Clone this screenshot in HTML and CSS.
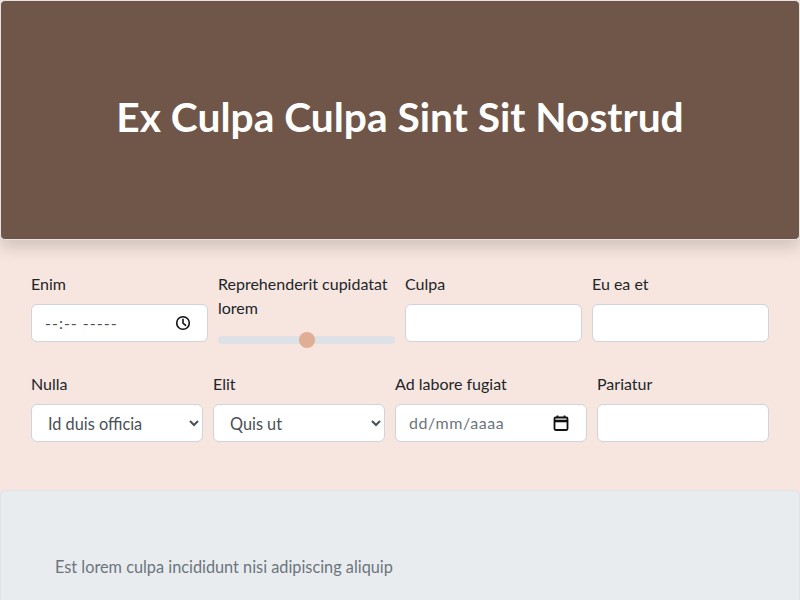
FILE: index.html
```html
<!DOCTYPE html>
<html lang="pt">
<head>
<meta charset="utf-8">
<title>Ex Culpa Culpa Sint Sit Nostrud</title>
<link rel="stylesheet" href="styles.css">
</head>
<body>
  <header class="hero">
    <h1 class="hero-title">Ex Culpa Culpa Sint Sit Nostrud</h1>
  </header>

  <section class="form-area">
    <div class="form-row row-one">
      <div class="field">
        <label class="field-label">Enim</label>
        <div class="control picker">
          <span class="picker-text">--:-- -----</span>
          <svg class="picker-icon" width="16" height="16" viewBox="0 0 16 16" fill="none" stroke="#111" stroke-width="1.6">
            <circle cx="8" cy="8" r="6.3"/>
            <path d="M8 4.3V8.2L10.6 10.3" stroke-linecap="round" stroke-linejoin="round"/>
          </svg>
        </div>
      </div>
      <div class="field">
        <label class="field-label">Reprehenderit cupidatat lorem</label>
        <input class="range" type="range" min="0" max="100" value="50">
      </div>
      <div class="field">
        <label class="field-label">Culpa</label>
        <input class="control" type="text">
      </div>
      <div class="field">
        <label class="field-label">Eu ea et</label>
        <input class="control" type="text">
      </div>
    </div>

    <div class="form-row row-two">
      <div class="field">
        <label class="field-label">Nulla</label>
        <select class="control select">
          <option>Id duis officia</option>
        </select>
      </div>
      <div class="field">
        <label class="field-label">Elit</label>
        <select class="control select">
          <option>Quis ut</option>
        </select>
      </div>
      <div class="field">
        <label class="field-label">Ad labore fugiat</label>
        <div class="control picker">
          <span class="picker-text date-text">dd/mm/aaaa</span>
          <svg class="picker-icon" width="18" height="18" viewBox="0 0 18 18" fill="none" stroke="#111" stroke-width="1.8">
            <rect x="2.5" y="3.5" width="13" height="12.5" rx="1.2"/>
            <path d="M2.5 7H15.5" stroke-width="2.6"/>
            <path d="M5.5 1.5V4M12.5 1.5V4" stroke-width="1.8"/>
          </svg>
        </div>
      </div>
      <div class="field">
        <label class="field-label">Pariatur</label>
        <input class="control" type="text">
      </div>
    </div>
  </section>

  <section class="note">
    <p class="note-text">Est lorem culpa incididunt nisi adipiscing aliquip</p>
  </section>
</body>
</html>
```

FILE: styles.css
```css
* {
  box-sizing: border-box;
}

html, body {
  margin: 0;
  padding: 0;
}

body {
  font-family: "Lato", "Open Sans", "Liberation Sans", sans-serif;
  font-size: 16px;
  line-height: 1.5;
  color: #212529;
  background: #f7e6e0;
  overflow: hidden;
}

.hero {
  height: 240px;
  padding-bottom: 6px;
  background: #705649;
  border: 1px solid #e4e4e4;
  border-radius: 5px;
  box-shadow: 0 8px 16px rgba(0, 0, 0, 0.15);
  display: flex;
  align-items: center;
  justify-content: center;
  position: relative;
  z-index: 1;
}

.hero-title {
  margin: 0;
  color: #ffffff;
  font-size: 40.7px;
  font-weight: 700;
  line-height: 1.2;
  letter-spacing: 0;
}

.form-area {
  padding: 32px 31px 28px 31px;
  background: #f7e6e0;
}

.form-row {
  display: grid;
  column-gap: 10px;
  margin-bottom: 20px;
  align-items: start;
}

.row-one {
  grid-template-columns: 1fr 1fr 1fr 1fr;
}

.row-two {
  grid-template-columns: 1fr 1fr 192px 1fr;
}

.field {
  display: flex;
  flex-direction: column;
  min-width: 0;
}

.field-label {
  display: block;
  margin-bottom: 8px;
  color: #212529;
  font-size: 16px;
  line-height: 24px;
}

.control {
  display: block;
  width: 100%;
  height: 38px;
  padding: 6px 12px;
  font-family: inherit;
  font-size: 16px;
  line-height: 24px;
  color: #212529;
  background: #ffffff;
  border: 1px solid #ced4da;
  border-radius: 6px;
  margin: 0;
}

.select {
  padding-left: 12px;
  color: #495057;
  font-size: 16.3px;
}

.picker {
  display: flex;
  align-items: center;
  justify-content: space-between;
  padding: 6px 16px 6px 13px;
}

.picker-text {
  color: #495057;
  letter-spacing: 1px;
}

.date-text {
  color: #6c757d;
  letter-spacing: 0.6px;
}

.picker-icon {
  flex: none;
}

.range {
  -webkit-appearance: none;
  appearance: none;
  width: 100%;
  height: 24px;
  margin: 0;
  padding: 0;
  background: transparent;
}

.range::-webkit-slider-runnable-track {
  height: 8px;
  background: #dee2e6;
  border-radius: 16px;
}

.range::-webkit-slider-thumb {
  -webkit-appearance: none;
  appearance: none;
  width: 16px;
  height: 16px;
  margin-top: -4px;
  border: 0;
  border-radius: 50%;
  background: #e0ad95;
}

.note {
  background: #e9ecef;
  border: 1px solid #dfe3e8;
  border-radius: 5px;
  padding: 64px 54px 40px 54px;
  min-height: 120px;
}

.note-text {
  margin: 0;
  color: #6c757d;
  font-size: 16.3px;
  line-height: 24px;
}
```
